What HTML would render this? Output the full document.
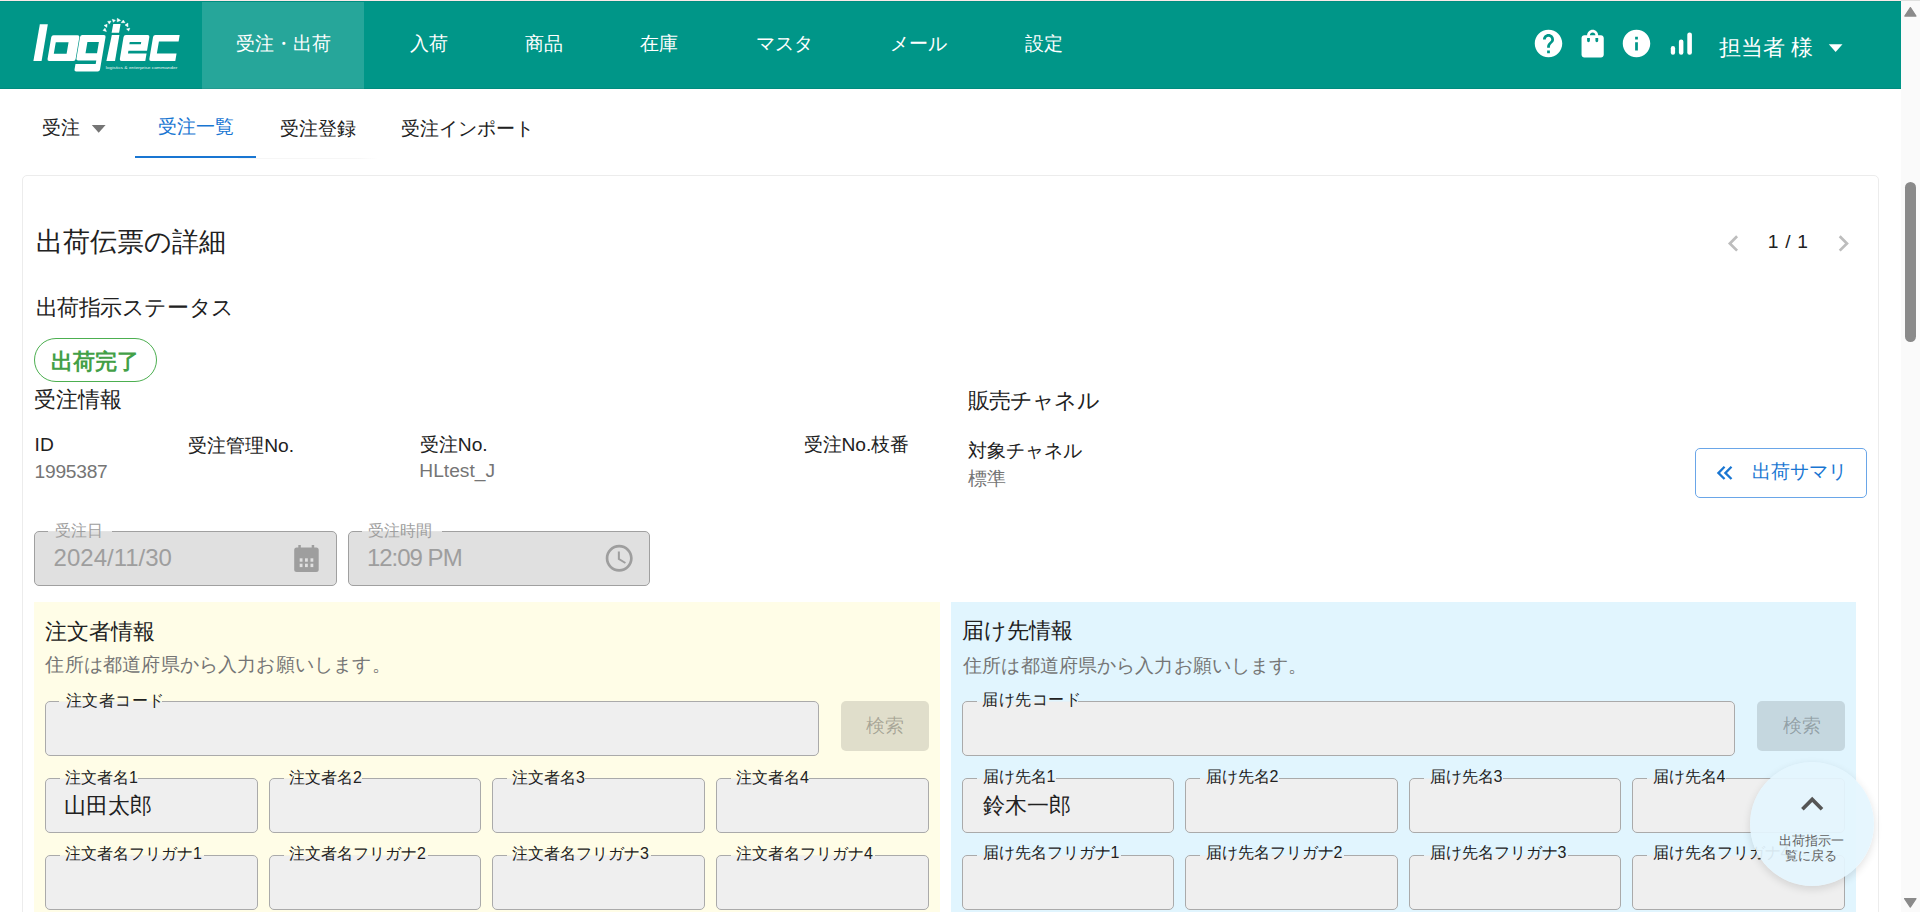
<!DOCTYPE html>
<html lang="ja">
<head>
<meta charset="utf-8">
<title>出荷伝票の詳細</title>
<style>
html,body{margin:0;padding:0;}
body{width:1920px;height:912px;overflow:hidden;position:relative;background:#fff;font-family:"Liberation Sans",sans-serif;color:#212121;}
.a{position:absolute;box-sizing:border-box;}
.t{position:absolute;white-space:nowrap;line-height:1.3;}
svg{position:absolute;overflow:visible;}
.inp{position:absolute;box-sizing:border-box;background:#efefef;border:1px solid #aaaaaa;border-radius:5px;}
.notch{position:absolute;height:3px;}
</style>
</head>
<body>
<!-- top browser line -->
<div class="a" style="left:0;top:0;width:1901px;height:1px;background:#fbe9e9"></div><div class="a" style="left:1901px;top:0;width:19px;height:1px;background:#dfe0df"></div>
<!-- header -->
<div class="a" style="left:0;top:1px;width:1901px;height:88px;background:#009688"></div>
<div class="a" style="left:0;top:1px;width:1901px;height:1px;background:#008e80"></div>
<div class="a" style="left:202px;top:2px;width:162px;height:87px;background:#26a69a"></div>
<div class="a" style="left:0;top:88px;width:1901px;height:1px;background:rgba(0,0,0,.07)"></div>

<!-- logo -->
<svg style="left:0;top:0" width="200" height="88" viewBox="0 0 200 88">
 <g fill="#fff">
  <g transform="translate(0,60.9) skewX(-9.65) translate(0,-60.9)">
   <path d="M33.6 24.2h8v36.7h-8.2z"/>
   <path fill-rule="evenodd" d="M49.2 35.2h24.1a2 2 0 0 1 2 2v21.7a2 2 0 0 1-2 2h-24.1a2 2 0 0 1-2-2v-21.7a2 2 0 0 1 2-2z M52.6 42.3v11.5h12.8v-11.5z"/>
   <path fill-rule="evenodd" d="M77.8 35.1h21.7a2 2 0 0 1 2 2v32.5a2 2 0 0 1-2 2h-21.5a2 2 0 0 1-2-2v-5.6h20.2v-3.6h-18.2a2 2 0 0 1-2-2v-21.3a2 2 0 0 1 2-2z M84.2 42v11.2h11.5v-11.2z"/>
   <path d="M107 24.1h7.3v8.6h-7.5z"/>
   <path d="M107.4 34.9h7.6v26h-8.6z"/>
   <path fill-rule="evenodd" d="M121.5 35.1h21.8a2 2 0 0 1 2 2v13.7h-18.6v2.7h18.6v7.4h-23.8a2 2 0 0 1-2-2v-21.8a2 2 0 0 1 2-2z M126.5 42v2.2h11.5v-2.2z"/>
   <path d="M151 35.1h24.3v6.3h-19.7v12.1h19.7v7.4h-24.3a2 2 0 0 1-2-2v-21.8a2 2 0 0 1 2-2z"/>
  </g>
  <path stroke="#fff" stroke-width="0.5" stroke-linejoin="round" d="M103 30.4L105 28.2L106.4 31.6z M104.05 25.4L107.1 24.3L106.8 27.4z M107.7 21.4L111 21.1L109.3 24.1z M112.2 19.3L115.4 20.2L113.4 22.3z M117.3 18.3L120.6 20.4L117.2 21.8z M123.3 20.05L125 22.7L121.2 22.7z M127.9 23.1L128 26.9L125 25.05z M129.8 28.2L128.7 31L126.55 29z"/>
  <text x="105.8" y="68.6" font-size="4.3" font-family="Liberation Sans" fill="#e6f4f2" textLength="71.5" lengthAdjust="spacingAndGlyphs">logistics &amp; enterprise commander</text>
 </g>
</svg>

<!-- header icons -->
<svg style="left:1531.9px;top:27px" width="33" height="33" viewBox="0 0 24 24"><path fill="#fff" d="M12 2C6.48 2 2 6.48 2 12s4.48 10 10 10 10-4.48 10-10S17.52 2 12 2zm1 17h-2v-2h2v2zm2.07-7.75l-.9.92C13.45 12.9 13 13.5 13 15h-2v-.5c0-1.1.45-2.1 1.17-2.83l1.24-1.26c.37-.36.59-.86.59-1.41 0-1.1-.9-2-2-2s-2 .9-2 2H8c0-2.21 1.79-4 4-4s4 1.79 4 4c0 .88-.36 1.68-.93 2.25z"/></svg>
<svg style="left:1575.7px;top:26.9px" width="33.3" height="33.3" viewBox="0 0 24 24"><path fill="#fff" d="M18 6h-2c0-2.21-1.79-4-4-4S8 3.79 8 6H6c-1.1 0-2 .9-2 2v12c0 1.1.9 2 2 2h12c1.1 0 2-.9 2-2V8c0-1.1-.9-2-2-2zm-8 4c0 .55-.45 1-1 1s-1-.45-1-1V8h2v2zm2-6c1.1 0 2 .9 2 2h-4c0-1.1.9-2 2-2zm4 6c0 .55-.45 1-1 1s-1-.45-1-1V8h2v2z"/></svg>
<svg style="left:1620.1px;top:27px" width="33" height="33" viewBox="0 0 24 24"><path fill="#fff" d="M12 2C6.48 2 2 6.48 2 12s4.48 10 10 10 10-4.48 10-10S17.52 2 12 2zm1 15h-2v-6h2v6zm0-8h-2V7h2v2z"/></svg>
<svg style="left:0;top:0" width="1" height="1"><g fill="#fff"><rect x="1670.8" y="46.1" width="4.3" height="8.7" rx="2.1"/><rect x="1678.9" y="39.5" width="4.5" height="15.3" rx="2.2"/><rect x="1687.3" y="32.5" width="4.6" height="22.3" rx="2.2"/></g></svg>
<svg style="left:0;top:0" width="1" height="1"><path fill="#fff" d="M1828.8 44.2h13.7l-6.85 7.9z"/></svg>

<!-- scrollbar -->
<div class="a" style="left:1901px;top:1px;width:19px;height:911px;background:#fafafa"></div>
<svg style="left:0;top:0" width="1" height="1"><g fill="#8a8a8a" stroke="#8a8a8a" stroke-width="1.2" stroke-linejoin="round"><path d="M1910.4 7.6l5.6 8.5h-11.2z"/><path d="M1904.6 898.6h11.4l-5.7 8.5z"/></g></svg>
<div class="a" style="left:1905px;top:182px;width:11px;height:160px;border-radius:5.5px;background:#8a8a8a"></div>

<!-- sub nav -->
<svg style="left:0;top:0" width="1" height="1"><path fill="#757575" d="M91.8 125h13.8l-6.9 7.8z"/></svg>
<div class="a" style="left:238px;top:158px;width:140px;height:1px;background:linear-gradient(90deg,#f6f6f6,#f6f6f6 85%,#fff)"></div>
<div class="a" style="left:135px;top:156px;width:121px;height:2px;background:#1976d2"></div>

<!-- card -->
<div class="a" style="left:22px;top:175px;width:1857px;height:800px;border:1px solid #ececec;border-radius:5px;"></div>

<!-- pager chevrons -->
<svg style="left:1717px;top:227px" width="32.8" height="32.8" viewBox="0 0 24 24"><path fill="#bdbdbd" d="M15.41 7.41L14 6l-6 6 6 6 1.41-1.41L10.83 12z"/></svg>
<svg style="left:1827.1px;top:227px" width="32.8" height="32.8" viewBox="0 0 24 24"><path fill="#bdbdbd" d="M10 6L8.59 7.41 13.17 12l-4.58 4.59L10 18l6-6z"/></svg>

<!-- chip -->
<div class="a" style="left:34px;top:338px;width:123px;height:44px;border:1px solid #4caf50;border-radius:22px;"></div>

<!-- summary button -->
<div class="a" style="left:1695px;top:448px;width:172px;height:50px;border:1px solid #6aa6e8;border-radius:5px;"></div>
<svg style="left:1711.1px;top:458.9px" width="27.8" height="27.8" viewBox="0 0 24 24"><path fill="#1976d2" d="M18.41 7.41L17 6l-6 6 6 6 1.41-1.41L13.83 12l4.58-4.59zm-6 0L11 6l-6 6 6 6 1.41-1.41L7.83 12l4.58-4.59z"/></svg>

<!-- date/time fields -->
<div class="a" style="left:34px;top:531px;width:303px;height:55px;background:#e0e0e0;border:1px solid #a0a0a0;border-radius:5px;"></div>
<div class="a" style="left:348px;top:531px;width:302px;height:55px;background:#e0e0e0;border:1px solid #a0a0a0;border-radius:5px;"></div>
<svg style="left:0;top:0" width="1" height="1"><g fill="#9e9e9e">
 <rect x="294.2" y="547.5" width="24.5" height="24.5" rx="2.5"/>
 <rect x="298.3" y="545" width="2.5" height="4"/><rect x="311.7" y="545" width="2.5" height="4"/>
 </g><g fill="#e0e0e0">
 <rect x="299.7" y="558.3" width="2.8" height="3.4"/><rect x="305" y="558.3" width="2.8" height="3.4"/><rect x="310.5" y="558.3" width="2.8" height="3.4"/>
 <rect x="299.7" y="563.7" width="2.8" height="3.4"/><rect x="305" y="563.7" width="2.8" height="3.4"/><rect x="310.5" y="563.7" width="2.8" height="3.4"/>
</g></svg>
<svg style="left:603.1px;top:542.3px" width="32.4" height="32.4" viewBox="0 0 24 24"><path fill="#9e9e9e" d="M11.99 2C6.47 2 2 6.48 2 12s4.47 10 9.99 10C17.52 22 22 17.52 22 12S17.52 2 11.99 2zM12 20c-4.42 0-8-3.58-8-8s3.58-8 8-8 8 3.58 8 8-3.58 8-8 8zm.5-13H11v6l5.25 3.15.75-1.23-4.5-2.67z"/></svg>

<!-- panels -->
<div class="a" style="left:34px;top:602px;width:906px;height:310px;background:#fffde7"></div>
<div class="a" style="left:951px;top:602px;width:905px;height:310px;background:#e1f5fe"></div>

<!-- left panel inputs -->
<div class="inp" style="left:45px;top:701px;width:774px;height:55px"></div>
<div class="a" style="left:841px;top:701px;width:88px;height:50px;border-radius:5px;background:rgba(0,0,0,.12)"></div>
<div class="inp" style="left:45px;top:778px;width:213px;height:55px"></div>
<div class="inp" style="left:269px;top:778px;width:212px;height:55px"></div>
<div class="inp" style="left:492px;top:778px;width:213px;height:55px"></div>
<div class="inp" style="left:716px;top:778px;width:213px;height:55px"></div>
<div class="inp" style="left:45px;top:855px;width:213px;height:55px"></div>
<div class="inp" style="left:269px;top:855px;width:212px;height:55px"></div>
<div class="inp" style="left:492px;top:855px;width:213px;height:55px"></div>
<div class="inp" style="left:716px;top:855px;width:213px;height:55px"></div>

<!-- right panel inputs -->
<div class="inp" style="left:962px;top:701px;width:773px;height:55px"></div>
<div class="a" style="left:1757px;top:701px;width:88px;height:50px;border-radius:5px;background:rgba(0,0,0,.12)"></div>
<div class="inp" style="left:962px;top:778px;width:212px;height:55px"></div>
<div class="inp" style="left:1185px;top:778px;width:213px;height:55px"></div>
<div class="inp" style="left:1409px;top:778px;width:212px;height:55px"></div>
<div class="inp" style="left:1632px;top:778px;width:213px;height:55px"></div>
<div class="inp" style="left:962px;top:855px;width:212px;height:55px"></div>
<div class="inp" style="left:1185px;top:855px;width:213px;height:55px"></div>
<div class="inp" style="left:1409px;top:855px;width:212px;height:55px"></div>
<div class="inp" style="left:1632px;top:855px;width:213px;height:55px"></div>

<div class="a" style="left:48.3px;top:531px;width:63.4px;height:1px;background:#e4e4e4"></div>
<div class="a" style="left:361.7px;top:531px;width:80.3px;height:1px;background:#e4e4e4"></div>
<div class="a" style="left:59.4px;top:701px;width:102.6px;height:1px;background:#f6f4e4"></div>
<div class="a" style="left:976.6px;top:701px;width:101.9px;height:1px;background:#e6f1f6"></div>
<div class="a" style="left:59.7px;top:778px;width:78.6px;height:1px;background:#f6f4e4"></div>
<div class="a" style="left:59.7px;top:855px;width:144.5px;height:1px;background:#f6f4e4"></div>
<div class="a" style="left:977.2px;top:778px;width:78.6px;height:1px;background:#e6f1f6"></div>
<div class="a" style="left:977.2px;top:855px;width:143.6px;height:1px;background:#e6f1f6"></div>
<div class="a" style="left:283.7px;top:778px;width:78.6px;height:1px;background:#f6f4e4"></div>
<div class="a" style="left:283.7px;top:855px;width:144.5px;height:1px;background:#f6f4e4"></div>
<div class="a" style="left:1200.2px;top:778px;width:78.6px;height:1px;background:#e6f1f6"></div>
<div class="a" style="left:1200.2px;top:855px;width:143.6px;height:1px;background:#e6f1f6"></div>
<div class="a" style="left:506.7px;top:778px;width:78.6px;height:1px;background:#f6f4e4"></div>
<div class="a" style="left:506.7px;top:855px;width:144.5px;height:1px;background:#f6f4e4"></div>
<div class="a" style="left:1424.2px;top:778px;width:78.6px;height:1px;background:#e6f1f6"></div>
<div class="a" style="left:1424.2px;top:855px;width:143.6px;height:1px;background:#e6f1f6"></div>
<div class="a" style="left:730.7px;top:778px;width:78.6px;height:1px;background:#f6f4e4"></div>
<div class="a" style="left:730.7px;top:855px;width:144.5px;height:1px;background:#f6f4e4"></div>
<div class="a" style="left:1647.2px;top:778px;width:78.6px;height:1px;background:#e6f1f6"></div>
<div class="a" style="left:1647.2px;top:855px;width:143.6px;height:1px;background:#e6f1f6"></div>
<div id="n1" class="t" style="left:235.70px;top:32.10px;font-size:19.2px;color:#fff;">受注・出荷</div>
<div id="n2" class="t" style="left:409.60px;top:32.10px;font-size:19.2px;color:#fff;">入荷</div>
<div id="n3" class="t" style="left:525.10px;top:32.00px;font-size:19.2px;color:#fff;">商品</div>
<div id="n4" class="t" style="left:640.10px;top:32.00px;font-size:19.2px;color:#fff;">在庫</div>
<div id="n5" class="t" style="left:756.10px;top:31.80px;font-size:19.2px;color:#fff;">マスタ</div>
<div id="n6" class="t" style="left:889.60px;top:32.10px;font-size:19.2px;color:#fff;">メール</div>
<div id="n7" class="t" style="left:1025.00px;top:32.16px;font-size:19.2px;color:#fff;">設定</div>
<div id="usr" class="t" style="left:1719.40px;top:33.71px;font-size:21.6px;color:#fff;">担当者 様</div>
<div id="s1" class="t" style="left:41.90px;top:115.80px;font-size:19.2px;color:#212121;">受注</div>
<div id="s2" class="t" style="left:158.20px;top:115.20px;font-size:19.2px;color:#1976d2;">受注一覧</div>
<div id="s3" class="t" style="left:279.50px;top:116.70px;font-size:19.2px;color:#212121;">受注登録</div>
<div id="s4" class="t" style="left:400.80px;top:116.70px;font-size:19.2px;color:#212121;">受注インポート</div>
<div id="c1" class="t" style="left:36.30px;top:224.96px;font-size:27px;color:#212121;">出荷伝票の詳細</div>
<div id="pg" class="t" style="left:1767.70px;top:229.80px;font-size:19.2px;color:#212121;word-spacing:1.5px;">1 / 1</div>
<div id="c2" class="t" style="left:35.50px;top:293.91px;font-size:21.6px;color:#212121;letter-spacing:-0.42px;">出荷指示ステータス</div>
<div id="chip" class="t" style="left:51.40px;top:348.11px;font-size:21.6px;color:#43a047;font-weight:bold;">出荷完了</div>
<div id="c3" class="t" style="left:34.20px;top:386.41px;font-size:21.6px;color:#212121;">受注情報</div>
<div id="c4" class="t" style="left:967.70px;top:386.61px;font-size:21.6px;color:#212121;letter-spacing:-0.8px;">販売チャネル</div>
<div id="id1" class="t" style="left:34.60px;top:433.20px;font-size:19.2px;color:#212121;">ID</div>
<div id="id2" class="t" style="left:34.60px;top:460.20px;font-size:19.2px;color:#757575;letter-spacing:-0.25px;">1995387</div>
<div id="k1" class="t" style="left:188.25px;top:433.50px;font-size:19.2px;color:#212121;">受注管理No.</div>
<div id="k2" class="t" style="left:419.80px;top:432.60px;font-size:19.2px;color:#212121;">受注No.</div>
<div id="k2v" class="t" style="left:419.30px;top:458.60px;font-size:19.2px;color:#757575;">HLtest_J</div>
<div id="k3" class="t" style="left:803.50px;top:432.80px;font-size:19.2px;color:#212121;">受注No.枝番</div>
<div id="ch1" class="t" style="left:967.70px;top:438.50px;font-size:19.2px;color:#212121;">対象チャネル</div>
<div id="ch2" class="t" style="left:967.50px;top:466.60px;font-size:19.2px;color:#757575;">標準</div>
<div id="sum" class="t" style="left:1751.80px;top:460.40px;font-size:19.2px;color:#1976d2;">出荷サマリ</div>
<div id="dl" class="t" style="left:54.60px;top:520.78px;font-size:16px;color:#9e9e9e;">受注日</div>
<div id="dv" class="t" style="left:53.60px;top:542.22px;font-size:24px;color:#9e9e9e;">2024/11/30</div>
<div id="tl" class="t" style="left:367.90px;top:520.78px;font-size:16px;color:#9e9e9e;">受注時間</div>
<div id="tv" class="t" style="left:366.90px;top:542.22px;font-size:24px;color:#9e9e9e;letter-spacing:-1px;">12:09 PM</div>
<div id="L1" class="t" style="left:45.40px;top:617.81px;font-size:21.6px;color:#212121;">注文者情報</div>
<div id="L2" class="t" style="left:45.40px;top:653.04px;font-size:19.2px;color:#757575;letter-spacing:0.19px;">住所は都道府県から入力お願いします。</div>
<div id="L3" class="t" style="left:65.80px;top:689.56px;font-size:16.2px;color:#212121;letter-spacing:0.5px;">注文者コード</div>
<div id="Lb" class="t" style="left:866.00px;top:713.60px;font-size:19.2px;color:rgba(0,0,0,.26);">検索</div>
<div id="R1" class="t" style="left:962.10px;top:616.81px;font-size:21.6px;color:#212121;">届け先情報</div>
<div id="R2" class="t" style="left:963.10px;top:653.60px;font-size:19.2px;color:#757575;letter-spacing:0.14px;">住所は都道府県から入力お願いします。</div>
<div id="R3" class="t" style="left:982.30px;top:688.52px;font-size:16.2px;color:#212121;letter-spacing:0.5px;">届け先コード</div>
<div id="Rb" class="t" style="left:1782.50px;top:713.60px;font-size:19.2px;color:rgba(0,0,0,.26);">検索</div>
<div id="Lv1" class="t" style="left:64.40px;top:792.21px;font-size:21.6px;color:#212121;">山田太郎</div>
<div id="Rv1" class="t" style="left:982.50px;top:792.11px;font-size:21.6px;color:#212121;">鈴木一郎</div>
<div id="La0" class="t" style="left:65.00px;top:768.18px;font-size:16px;color:#212121;">注文者名1</div>
<div id="Lf0" class="t" style="left:65.00px;top:844.48px;font-size:16px;color:#212121;">注文者名フリガナ1</div>
<div id="Ra0" class="t" style="left:982.50px;top:767.18px;font-size:16px;color:#212121;">届け先名1</div>
<div id="Rf0" class="t" style="left:982.50px;top:843.48px;font-size:16px;color:#212121;">届け先名フリガナ1</div>
<div id="La1" class="t" style="left:289.00px;top:768.18px;font-size:16px;color:#212121;">注文者名2</div>
<div id="Lf1" class="t" style="left:289.00px;top:844.48px;font-size:16px;color:#212121;">注文者名フリガナ2</div>
<div id="Ra1" class="t" style="left:1205.50px;top:767.18px;font-size:16px;color:#212121;">届け先名2</div>
<div id="Rf1" class="t" style="left:1205.50px;top:843.48px;font-size:16px;color:#212121;">届け先名フリガナ2</div>
<div id="La2" class="t" style="left:512.00px;top:768.18px;font-size:16px;color:#212121;">注文者名3</div>
<div id="Lf2" class="t" style="left:512.00px;top:844.48px;font-size:16px;color:#212121;">注文者名フリガナ3</div>
<div id="Ra2" class="t" style="left:1429.50px;top:767.18px;font-size:16px;color:#212121;">届け先名3</div>
<div id="Rf2" class="t" style="left:1429.50px;top:843.48px;font-size:16px;color:#212121;">届け先名フリガナ3</div>
<div id="La3" class="t" style="left:736.00px;top:768.18px;font-size:16px;color:#212121;">注文者名4</div>
<div id="Lf3" class="t" style="left:736.00px;top:844.48px;font-size:16px;color:#212121;">注文者名フリガナ4</div>
<div id="Ra3" class="t" style="left:1652.50px;top:767.18px;font-size:16px;color:#212121;">届け先名4</div>
<div id="Rf3" class="t" style="left:1652.50px;top:843.48px;font-size:16px;color:#212121;">届け先名フリガナ4</div>

<!-- floating button -->
<div class="a" id="fab" style="left:1749.7px;top:761.8px;width:124.2px;height:124.2px;border-radius:50%;background:rgba(228,245,254,0.93);box-shadow:0 3px 8px rgba(0,0,0,.12)"></div>
<svg style="left:1789.8px;top:782.3px" width="44.4" height="44.4" viewBox="0 0 24 24"><path fill="#555" d="M12 8l-6 6 1.41 1.41L12 10.83l4.59 4.58L18 14z"/></svg>
<div id="fab1" class="t" style="left:1779.00px;top:834.04px;font-size:13px;color:#616161;line-height:1;">出荷指示一</div>
<div id="fab2" class="t" style="left:1785.00px;top:849.24px;font-size:13px;color:#616161;line-height:1;">覧に戻る</div>
</body>
</html>
